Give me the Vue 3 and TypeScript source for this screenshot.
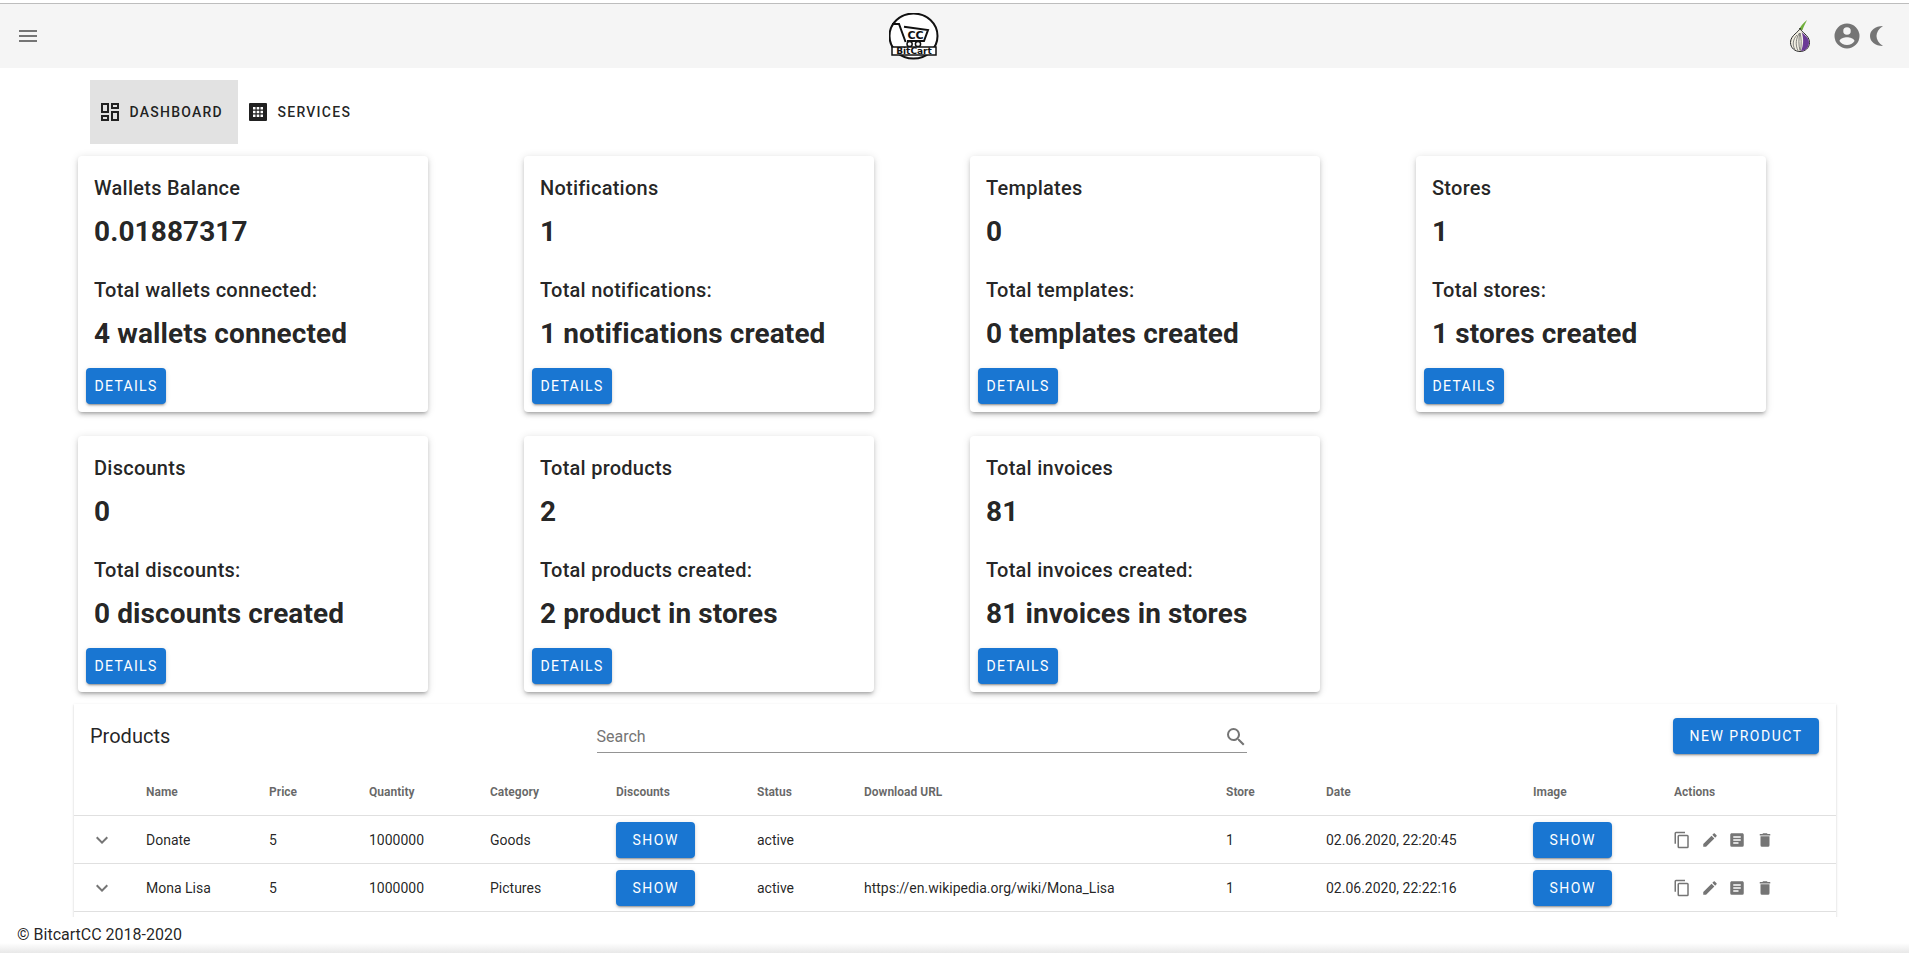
<script setup lang="ts">
interface Card {
  title: string
  value: string
  label: string
  summary: string
}
interface Product {
  name: string
  url: string
  date: string
  category: string
}

const cards: Card[] = [
  { title: 'Wallets Balance', value: '0.01887317', label: 'Total wallets connected:', summary: '4 wallets connected' },
  { title: 'Notifications', value: '1', label: 'Total notifications:', summary: '1 notifications created' },
  { title: 'Templates', value: '0', label: 'Total templates:', summary: '0 templates created' },
  { title: 'Stores', value: '1', label: 'Total stores:', summary: '1 stores created' },
  { title: 'Discounts', value: '0', label: 'Total discounts:', summary: '0 discounts created' },
  { title: 'Total products', value: '2', label: 'Total products created:', summary: '2 product in stores' },
  { title: 'Total invoices', value: '81', label: 'Total invoices created:', summary: '81 invoices in stores' },
]

const headers = ['', 'Name', 'Price', 'Quantity', 'Category', 'Discounts', 'Status', 'Download URL', 'Store', 'Date', 'Image', 'Actions']
const widths = [56, 123, 100, 121, 126, 141, 107, 362, 100, 207, 141, 178]

const products: Product[] = [
  { name: 'Donate', category: 'Goods', url: '', date: '02.06.2020, 22:20:45' },
  { name: 'Mona Lisa', category: 'Pictures', url: 'https://en.wikipedia.org/wiki/Mona_Lisa', date: '02.06.2020, 22:22:16' },
]
</script>

<template>
  <div class="page">
    <div class="topline"></div>
    <header class="appbar">
      <svg class="ic24 grey" viewBox="0 0 24 24"><path d="M3,18H21V16H3V18M3,13H21V11H3V13M3,6V8H21V6H3Z" /></svg>
      <svg class="logo" viewBox="0 0 50 48">
        <ellipse cx="24.5" cy="23" rx="24" ry="22.5" fill="#fff" stroke="#111" stroke-width="2" />
        <path d="M3 11 H10 L16.6 29 M15 13.7 L39 17 L35 28 H18" fill="none" stroke="#111" stroke-width="2" />
        <text x="26.5" y="26" class="logo-cc">CC</text>
        <circle cx="20.6" cy="31" r="2.6" fill="none" stroke="#111" stroke-width="1.5" />
        <circle cx="29" cy="31" r="2.6" fill="none" stroke="#111" stroke-width="1.5" />
        <rect x="3" y="34" width="44" height="8" fill="#fff" stroke="#111" stroke-width="1.5" />
        <text x="25" y="41" class="logo-name">BitCart</text>
      </svg>
      <div class="appbar-right">
        <svg class="tor" viewBox="0 0 20 32">
          <path d="M9 10 C10 7 13 3 17 0 C15 4 14 6 12.5 10 Z" fill="#6fae3a" />
          <path d="M10 8 C10.5 12 19.5 15 19.5 22.5 C19.5 28 15 31.5 10 31.5 C5 31.5 .5 28 .5 22.5 C.5 15 9.5 12 10 8 Z" fill="#f2efe2" stroke="#2a2a2a" stroke-width="1" />
          <path d="M11.5 12 C13 14.5 19 16.5 19 22.5 C19 27.5 15 31 11 31 C13.5 26 14 18 11.5 12 Z" fill="#6b3a96" />
          <path d="M9.5 13 C6 18 5 25 8 30.5 M10 13 C8.5 18 8.5 25 10 30.5 M7 15 C3 19 2 25 5 29.5 M10 13 C11.5 18 11.5 25 10.5 30.5" fill="none" stroke="#666" stroke-width=".8" />
        </svg>
        <svg class="ic30 grey" viewBox="0 0 24 24"><path d="M12,19.2C9.5,19.2 7.29,17.92 6,16C6.03,14 10,12.9 12,12.9C14,12.9 17.97,14 18,16C16.71,17.92 14.5,19.2 12,19.2M12,5A3,3 0 0,1 15,8A3,3 0 0,1 12,11A3,3 0 0,1 9,8A3,3 0 0,1 12,5M12,2A10,10 0 0,0 2,12A10,10 0 0,0 12,22A10,10 0 0,0 22,12A10,10 0 0,0 12,2Z" /></svg>
        <svg class="moon grey" viewBox="0 0 13 20"><path d="M13 0 C5 0 0 4.5 0 10 C0 15.5 5 20 13 20 C8.5 17 6.5 13.5 6.5 10 C6.5 6.5 8.5 3 13 0 Z" /></svg>
      </div>
    </header>

    <main class="main">
      <nav class="tabs">
        <a class="tab active">
          <svg class="ic24 dark tab-icon" viewBox="0 0 24 24"><path d="M19,5V7H15V5H19M9,5V11H5V5H9M19,13V19H15V13H19M9,17V19H5V17H9M21,3H13V9H21V3M11,3H3V13H11V3M21,11H13V21H21V11M11,15H3V21H11V15Z" /></svg>
          <span>Dashboard</span>
        </a>
        <a class="tab">
          <svg class="ic24 dark tab-icon" viewBox="0 0 24 24"><path fill-rule="evenodd" d="M4 3H20A1 1 0 0 1 21 4V20A1 1 0 0 1 20 21H4A1 1 0 0 1 3 20V4A1 1 0 0 1 4 3ZM7 7V9.5H9.5V7ZM10.7 7V9.5H13.3V7ZM14.5 7V9.5H17V7ZM7 10.7V13.3H9.5V10.7ZM10.7 10.7V13.3H13.3V10.7ZM14.5 10.7V13.3H17V10.7ZM7 14.5V17H9.5V14.5ZM10.7 14.5V17H13.3V14.5ZM14.5 14.5V17H17V14.5Z" /></svg>
          <span>Services</span>
        </a>
      </nav>

      <section class="cards">
        <article v-for="card in cards" :key="card.title" class="card">
          <div class="card-body">
            <div class="card-title">{{ card.title }}</div>
            <div class="card-value">{{ card.value }}</div>
            <div class="card-title card-label">{{ card.label }}</div>
            <div class="card-value card-summary">{{ card.summary }}</div>
          </div>
          <div class="card-actions"><button class="btn details">Details</button></div>
        </article>
      </section>

      <section class="products">
        <div class="products-top">
          <div class="products-title">Products</div>
          <div class="search">
            <span>Search</span>
            <svg class="ic24 grey" viewBox="0 0 24 24"><path d="M9.5,3A6.5,6.5 0 0,1 16,9.5C16,11.11 15.41,12.59 14.44,13.73L14.71,14H15.5L20.5,19L19,20.5L14,15.5V14.71L13.73,14.44C12.59,15.41 11.11,16 9.5,16A6.5,6.5 0 0,1 3,9.5A6.5,6.5 0 0,1 9.5,3M9.5,5C7,5 5,7 5,9.5C5,12 7,14 9.5,14C12,14 14,12 14,9.5C14,7 12,5 9.5,5Z" /></svg>
          </div>
          <button class="btn new">New product</button>
        </div>
        <table class="table">
          <colgroup><col v-for="(w, i) in widths" :key="i" :style="{ width: w + 'px' }" /></colgroup>
          <thead>
            <tr><th v-for="h in headers" :key="h">{{ h }}</th></tr>
          </thead>
          <tbody>
            <tr v-for="p in products" :key="p.name">
              <td><svg class="ic24 grey" viewBox="0 0 24 24"><path d="M7.41,8.58L12,13.17L16.59,8.58L18,10L12,16L6,10L7.41,8.58Z" /></svg></td>
              <td>{{ p.name }}</td>
              <td>5</td>
              <td>1000000</td>
              <td>{{ p.category }}</td>
              <td><button class="btn show">Show</button></td>
              <td>active</td>
              <td>{{ p.url }}</td>
              <td>1</td>
              <td>{{ p.date }}</td>
              <td><button class="btn show">Show</button></td>
              <td>
                <div class="actions">
                  <svg class="ic18 grey" viewBox="0 0 24 24"><path d="M19,21H8V7H19M19,5H8A2,2 0 0,0 6,7V21A2,2 0 0,0 8,23H19A2,2 0 0,0 21,21V7A2,2 0 0,0 19,5M16,1H4A2,2 0 0,0 2,3V17H4V3H16V1Z" /></svg>
                  <svg class="ic18 grey" viewBox="0 0 24 24"><path d="M20.71,7.04C21.1,6.65 21.1,6 20.71,5.63L18.37,3.29C18,2.9 17.35,2.9 16.96,3.29L15.12,5.12L18.87,8.87M3,17.25V21H6.75L17.81,9.93L14.06,6.18L3,17.25Z" /></svg>
                  <svg class="ic18 grey" viewBox="0 0 24 24"><path d="M19,3H5C3.89,3 3,3.89 3,5V19A2,2 0 0,0 5,21H19A2,2 0 0,0 21,19V5C21,3.89 20.1,3 19,3M14,17H7V15H14V17M17,13H7V11H17V13M17,9H7V7H17V9Z" /></svg>
                  <svg class="ic18 grey" viewBox="0 0 24 24"><path d="M19,4H15.5L14.5,3H9.5L8.5,4H5V6H19M6,19A2,2 0 0,0 8,21H16A2,2 0 0,0 18,19V7H6V19Z" /></svg>
                </div>
              </td>
            </tr>
          </tbody>
        </table>
        <div class="table-rest"></div>
      </section>
    </main>

    <footer class="footer">© BitcartCC 2018-2020</footer>
    <div class="strip"></div>
  </div>
</template>

<style>
html, body { margin: 0; height: 100%; overflow: hidden; background: #fff; }
</style>

<style scoped>
.page {
  height: 953px;
  display: flex;
  flex-direction: column;
  font-family: Roboto, "Liberation Sans", sans-serif;
  color: rgba(0, 0, 0, .87);
  background: #fff;
}
.topline { height: 4px; flex: none; box-sizing: border-box; border-bottom: 1px solid #bdbdbd; }
.appbar {
  flex: none;
  height: 64px;
  background: #f5f5f5;
  display: flex;
  align-items: center;
  padding: 0 16px;
  position: relative;
}
.logo { position: absolute; left: 889px; top: 9px; width: 50px; height: 48px; }
.logo-cc { font: 700 11px "DejaVu Sans", sans-serif; text-anchor: middle; fill: #111; }
.logo-name { font: 700 9px "DejaVu Sans", sans-serif; text-anchor: middle; fill: #111; }
.appbar-right { margin-left: auto; display: flex; align-items: center; }
.tor { width: 20px; height: 32px; margin-right: 21.5px; }
.moon { width: 13px; height: 20px; margin-left: 8.5px; margin-right: 10px; }
.ic24 { width: 24px; height: 24px; flex: none; display: block; }
.ic30 { width: 30px; height: 30px; flex: none; display: block; }
.ic18 { width: 18px; height: 18px; flex: none; display: block; }
.grey { fill: #757575; }
.dark { fill: #212121; }

.main { flex: 1; min-height: 0; overflow: hidden; padding: 12px 0 0; }
.tabs { display: flex; margin-left: 90px; height: 64px; }
.tab {
  display: flex;
  align-items: center;
  padding: 0 15px 0 8px;
  font-size: 14px;
  font-weight: 500;
  letter-spacing: .0892857em;
  text-transform: uppercase;
}
.tab.active { background: #e2e2e2; }
.tab-icon { margin-right: 7.5px; }

.cards {
  display: grid;
  grid-template-columns: repeat(4, 350px);
  column-gap: 96px;
  row-gap: 24px;
  margin: 12px 0 0 78px;
}
.card {
  height: 256px;
  border-radius: 4px;
  background: #fff;
  box-shadow: 0 3px 3px -2px rgba(0,0,0,.2), 0 3px 4px 0 rgba(0,0,0,.14), 0 1px 8px 0 rgba(0,0,0,.12);
  display: flex;
  flex-direction: column;
}
.card-body { height: 204px; box-sizing: border-box; padding: 16px 16px 0; }
.card-title { font-size: 20px; font-weight: 500; line-height: 32px; letter-spacing: .0125em; }
.card-value { font-size: 28px; font-weight: 700; line-height: 32px; margin-top: 12px; letter-spacing: .1px; }
.card-label { margin-top: 26px; }
.card-summary { margin-top: 12px; }
.card-actions { padding: 8px; }

.btn {
  height: 36px;
  padding: 0 16px;
  border: 0;
  border-radius: 4px;
  background: #1976d2;
  color: #fff;
  font-family: inherit;
  font-size: 14px;
  font-weight: 400;
  letter-spacing: 1.5px;
  text-transform: uppercase;
  white-space: nowrap;
  box-shadow: 0 3px 1px -2px rgba(0,0,0,.2), 0 2px 2px 0 rgba(0,0,0,.14), 0 1px 5px 0 rgba(0,0,0,.12);
  display: block;
}
.btn.details { padding: 0 8.5px; letter-spacing: 1.3px; }
.btn.show { padding: 0 16.5px; }
.btn.new { padding: 0 16.5px; flex: none; margin-left: auto; }

.products {
  margin: 12px 0 0 74px;
  width: 1762px;
  background: #fff;
  box-shadow: 0 2px 1px -1px rgba(0,0,0,.2), 0 1px 1px 0 rgba(0,0,0,.14), 0 1px 3px 0 rgba(0,0,0,.12);
}
.products-top {
  height: 64px;
  box-sizing: border-box;
  display: flex;
  align-items: center;
  padding: 14px 17px 14px 16px;
}
.products-title { font-size: 20px; line-height: 32px; width: 506.5px; flex: none; }
.search {
  width: 650px;
  flex: none;
  height: 34px;
  box-sizing: border-box;
  padding-top: 2px;
  border-bottom: 1px solid #949494;
  display: flex;
  align-items: center;
  justify-content: space-between;
  font-size: 16px;
  color: #757575;
}
.search svg { margin-right: -1px; }
.table { border-collapse: collapse; table-layout: fixed; width: 1762px; }
th, td { padding: 0 16px; text-align: left; border-bottom: 1px solid #e0e0e0; box-sizing: border-box; white-space: nowrap; }
th { height: 47px; padding-top: 1px; font-size: 12px; font-weight: 700; color: rgba(0,0,0,.6); }
td { height: 48px; padding-top: 2px; font-size: 14px; }
.table-rest { height: 60px; }
.actions { display: flex; gap: 9.5px; margin-left: -1px; }

.footer {
  flex: none;
  height: 26px;
  box-sizing: border-box;
  padding: 6px 0 0 17px;
  line-height: 24px;
  font-size: 16px;
  background: #fff;
}
.strip { flex: none; height: 10px; background: linear-gradient(#fff, #e8e8e8); }
</style>
